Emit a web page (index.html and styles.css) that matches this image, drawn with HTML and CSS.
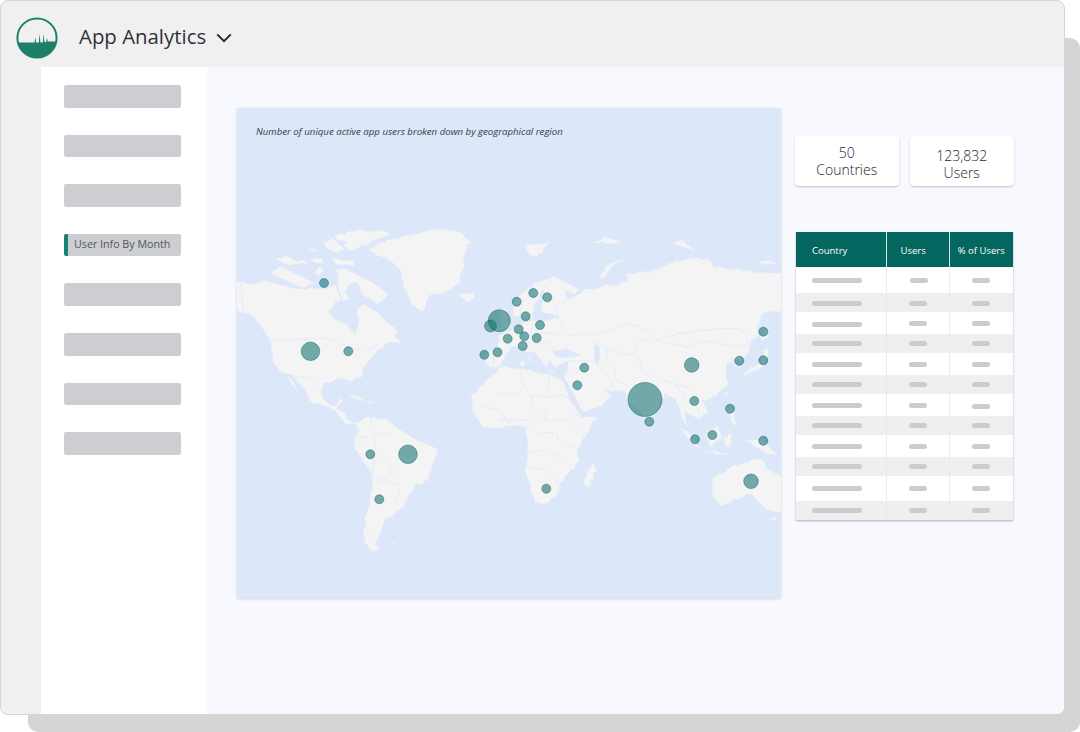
FILE: index.html
```html
<!DOCTYPE html>
<html lang="en">
<head>
    <meta charset="UTF-8">
    <title>App Analytics</title>
    <link rel="stylesheet" href="styles.css">
</head>
<body>
    <div class="backdrop"></div>
    <div class="window">
        <header class="topbar">
            <svg class="logo" width="42" height="42" viewBox="0 0 42 42">
                <defs>
                    <clipPath id="logoClip"><circle cx="21" cy="21" r="20"/></clipPath>
                </defs>
                <circle cx="21" cy="21" r="19.6" fill="none" stroke="#1e7f69" stroke-width="2"/>
                <path clip-path="url(#logoClip)" fill="#1e7f69" d="M0 25.5H18.5L19.3 20 20.1 25.5H22.8L23.6 16.7 24.4 25.5H26.8L27.6 17 28.4 25H30.2L31 21 31.8 24.5H42V42H0Z"/>
            </svg>
            <h1 class="app-title">App Analytics</h1>
            <svg class="chevron" width="16" height="10" viewBox="0 0 16 10">
                <path d="M1.2 1.4L8 8.2 14.8 1.4" fill="none" stroke="#26262e" stroke-width="1.9"/>
            </svg>
        </header>
        <div class="body-row">
            <div class="rail"></div>
            <nav class="sidebar">
                <div class="nav-item"></div>
                <div class="nav-item"></div>
                <div class="nav-item"></div>
                <div class="nav-item active">User Info By Month</div>
                <div class="nav-item"></div>
                <div class="nav-item"></div>
                <div class="nav-item"></div>
                <div class="nav-item"></div>
            </nav>
            <main class="content">
                <section class="map-panel">
                    <svg class="world" viewBox="237 108 544 490">
                        <defs>
                            <!-- roughens the hand traced coasts a bit -->
                            <filter id="coast" x="-5%" y="-5%" width="110%" height="110%">
                                <feTurbulence type="fractalNoise" baseFrequency="0.11" numOctaves="2" seed="4"/>
                                <feDisplacementMap in="SourceGraphic" scale="4.5"/>
                            </filter>
                        </defs>
                        <g filter="url(#coast)">
                        <!-- americas, traced at 3x -->
                        <g transform="translate(230 220) scale(.33333)">
                            <g class="land">
                                <path d="M0 183L60 190 105 181 165 198 215 205 275 205 318 192 335 240 318 242 295 270 310 295 350 310 375 342 385 310 380 265 405 253 440 275 470 305 495 322 505 345 490 345 520 372 490 365 450 385 440 395 420 420 400 440 398 465 365 482 372 508 358 480 320 478 285 490 275 510 283 540 305 558 320 555 333 530 338 545 320 565 345 580 352 600 378 612 345 612 320 578 305 568 270 552 240 545 225 510 185 465 150 455 128 425 125 375 115 355 95 322 70 290 55 278 0 272Z"/>
                                <path d="M170 468L185 475 210 522 190 500Z"/>
                                <path d="M125 150L150 138 175 150 230 178 260 192 215 200 165 180 125 165Z"/>
                                <path d="M140 115L165 105 195 120 235 125 232 132 180 135 150 125Z"/>
                                <path d="M240 115L275 115 280 130 255 130Z"/>
                                <path d="M250 150L275 142 285 160 262 168Z"/>
                                <path d="M235 85L265 90 255 98Z"/>
                                <path d="M282 65L310 55 345 90 310 95 285 80Z"/>
                                <path d="M315 45L380 28 470 35 480 42 445 60 400 75 365 95 340 80 350 65 320 60Z"/>
                                <path d="M305 115L375 125 370 135 320 135Z"/>
                                <path d="M322 150L345 145 385 165 425 185 475 222 465 235 440 255 420 235 395 225 385 190 360 190 345 215 360 235 340 245 325 200Z"/>
                                <path d="M415 90L470 60 560 40 620 25 690 35 720 65 750 55 720 70 705 100 700 140 690 190 640 220 600 230 575 275 545 255 520 200 510 150 480 120 440 105Z"/>
                                <path d="M685 225L730 218 740 235 710 245Z"/>
                                <path d="M350 522L385 530 410 545 380 540Z"/>
                                <path d="M412 545L440 549 418 553Z"/>
                                <path d="M480 970L495 965 490 973Z"/>
                                <path d="M378 612L410 590 470 600 520 635 560 660 625 688 610 730 595 780 550 800 540 830 510 870 470 900 455 930 440 970 450 990 425 995 400 960 405 900 425 810 425 760 370 680 375 650 385 630Z"/>
                            </g>
                            <g class="borders">
                                <path d="M115 357H295L340 375 395 390 440 375"/>
                                <path d="M37 185V272"/>
                                <path d="M183 465L240 478 275 510"/>
                                <path d="M420 595L435 640 480 640 500 620 530 635"/>
                                <path d="M370 680L410 650 435 650 435 690 480 730 490 750 470 775 510 800 495 855"/>
                                <path d="M430 700V760L445 780 470 775"/>
                                <path d="M430 760L405 900 420 960"/>
                                <path d="M375 650L410 650"/>
                                <path d="M445 780L510 800"/>
                            </g>
                        </g>
                        <!-- old world -->
                        <g transform="translate(500 220) scale(.33333)">
                            <g class="land">
                                <path d="M-40 395L-8 388-5 362-5 345 30 335 55 312 100 300 125 305 175 290 165 265 195 240 210 235 270 205 330 195 385 185 375 160 415 160 470 148 510 128 590 112 630 118 640 140 720 150 790 160 880 160V275H790L770 320 775 340 755 370 750 395 720 420 695 415 700 425 715 455 695 425 680 430 682 490 650 525 610 545 625 580 600 600 585 590 555 575 560 620 590 665 570 640 545 590 530 540 495 520 478 555 445 610 418 570 385 552 370 510 335 515 310 505 335 525 300 560 248 578 225 530 200 485 195 470 210 425 160 440 150 420 135 440 115 410 105 395 75 395 110 435 95 425 65 380 35 385 15 410 0 440-30 445-40 430Z"/>
                                <path d="M35 285L38 245 100 190 165 170 235 205 215 225 195 240 165 265 175 290 100 300 65 290Z"/>
                                <path d="M-10 450L-45 490-85 530-85 570-50 625 0 625 30 615 75 620 85 700 75 750 105 850 150 850 185 790 235 720 235 690 292 590 245 590 210 540 190 485 150 465 60 445 0 440Z"/>
                                <path d="M-25 310L-8 305-5 330-25 335Z"/>
                                <path d="M-5 270L15 265 25 300 35 320-5 335 5 305Z"/>
                                <path d="M70 75L155 68 130 85 110 112 90 105Z"/>
                                <path d="M295 172L330 130 385 112 340 135 310 178Z"/>
                                <path d="M260 65L300 62 320 52 365 65 340 72 300 70Z"/>
                                <path d="M515 70L545 58 590 95 560 85Z"/>
                                <path d="M770 122L800 120 840 132 790 135Z"/>
                                <path d="M730 470L790 440 810 390 795 385 785 425 730 460Z"/>
                                <path d="M775 342L800 330 810 352 785 362Z"/>
                                <path d="M672 525L682 510 682 525Z"/>
                                <path d="M680 560L700 570 712 620 695 610Z"/>
                                <path d="M538 625L560 630 600 685 585 680Z"/>
                                <path d="M600 690L650 695 705 705 650 703Z"/>
                                <path d="M615 640L650 615 668 650 630 682Z"/>
                                <path d="M670 650L700 645 690 682 675 680Z"/>
                                <path d="M735 660L790 660 810 685 840 710 790 695Z"/>
                                <path d="M635 780L700 740 750 720 790 720 800 745 880 790V885L800 870 750 820 660 855 640 830Z"/>
                                <path d="M810 893L830 890 825 905Z"/>
                                <path d="M250 790L280 725 288 750 265 800Z"/>
                                <path d="M440 595L458 600 452 618 440 612Z"/>
                                <path d="M60 425L72 420 72 440 60 438Z"/>
                                <path d="M140 452L165 450 160 458Z"/>
                            </g>
                            <g class="water">
                                <path d="M160 395L200 385 240 405 215 415 170 412Z"/>
                                <path d="M280 365L300 385 295 430 300 437 280 420 285 395Z"/>
                                <path d="M100 298L100 265 120 225 128 205 135 225 125 255 125 275 150 280 175 290 125 300Z"/>
                                <path d="M200 215L225 222 210 235 198 228Z"/>
                            </g>
                            <g class="borders">
                                <path d="M60 445L65 520H-10"/>
                                <path d="M145 470V530H95L65 490"/>
                                <path d="M145 530H205"/>
                                <path d="M95 530V570L135 600V570"/>
                                <path d="M0 600H95"/>
                                <path d="M135 600H200L240 620"/>
                                <path d="M200 570L240 590"/>
                                <path d="M100 635H170L175 660 235 690"/>
                                <path d="M90 700L125 690 200 720"/>
                                <path d="M75 745H125L180 790"/>
                                <path d="M-50 560L0 570 30 615"/>
                                <path d="M270 345L345 325 390 310 430 325 470 355 500 350 560 340 610 330 670 325 720 325 750 370 700 380 670 370 600 365 560 380 510 370 470 360 425 360 400 400 420 425 430 460 490 480 530 495 570 500"/>
                                <path d="M290 430L330 480 345 510"/>
                                <path d="M320 385L385 405 400 400"/>
                                <path d="M290 370L320 385 320 420 345 450 350 480 385 500"/>
                                <path d="M210 425L260 420 290 430"/>
                                <path d="M215 470L260 420"/>
                                <path d="M530 495L555 540 590 560 600 600"/>
                                <path d="M170 290L205 345 270 345"/>
                                <path d="M100 300L90 345 40 335"/>
                                <path d="M90 345L150 340 205 345"/>
                                <path d="M70 395L90 370 150 370 165 395"/>
                                <path d="M20 385L-5 400"/>
                                <path d="M-20 395V440"/>
                                <path d="M100 190L70 250 60 290"/>
                                <path d="M130 205L165 170"/>
                            </g>
                        </g>
                        </g>
                        <g class="bubbles">
                            <circle cx="324" cy="283" r="4.5"/>
                            <circle cx="310.500" cy="351.300" r="9.300"/>
                            <circle cx="348.300" cy="351.300" r="4.500"/>
                            <circle cx="370.300" cy="454.300" r="4.500"/>
                            <circle cx="408" cy="454.300" r="9.300"/>
                            <circle cx="379.300" cy="499.300" r="4.500"/>
                            <circle cx="484.300" cy="354.700" r="4.500"/>
                            <circle cx="497.500" cy="352.300" r="4.500"/>
                            <circle cx="490.500" cy="326" r="6"/>
                            <circle cx="499.300" cy="320.700" r="11"/>
                            <circle cx="516.700" cy="301.700" r="4.500"/>
                            <circle cx="533.300" cy="293" r="4.500"/>
                            <circle cx="547.300" cy="297.300" r="4.500"/>
                            <circle cx="525.700" cy="316.300" r="4.500"/>
                            <circle cx="540" cy="325" r="4.500"/>
                            <circle cx="518.700" cy="329.300" r="4.500"/>
                            <circle cx="507.700" cy="338.700" r="4.500"/>
                            <circle cx="524.300" cy="336.300" r="4.500"/>
                            <circle cx="536.700" cy="338" r="4.500"/>
                            <circle cx="522.700" cy="346" r="4.500"/>
                            <circle cx="584.300" cy="367.700" r="4.500"/>
                            <circle cx="577.300" cy="385.300" r="4.500"/>
                            <circle cx="645" cy="399.500" r="17"/>
                            <circle cx="649.300" cy="421.700" r="4.500"/>
                            <circle cx="691.700" cy="365" r="7.300"/>
                            <circle cx="694.300" cy="401" r="4.500"/>
                            <circle cx="730" cy="408.700" r="4.500"/>
                            <circle cx="695" cy="439.300" r="4.500"/>
                            <circle cx="712.300" cy="435" r="4.500"/>
                            <circle cx="763.300" cy="440.700" r="4.500"/>
                            <circle cx="751" cy="481.300" r="7.300"/>
                            <circle cx="763.300" cy="331.700" r="4.500"/>
                            <circle cx="739.300" cy="360.700" r="4.500"/>
                            <circle cx="763.300" cy="360.300" r="4.500"/>
                            <circle cx="546.300" cy="488.700" r="4.500"/>
                        </g>
                    </svg>
                    <p class="map-caption">Number of unique active app users broken down by geographical region</p>
                </section>
                <aside class="side">
                    <div class="stats">
                        <div class="stat">50<br>Countries</div>
                        <div class="stat stat-low">123,832<br>Users</div>
                    </div>
                    <table class="users-table">
                        <thead>
                            <tr><th class="col-country">Country</th><th class="col-users">Users</th><th class="col-pct">% of Users</th></tr>
                        </thead>
                        <tbody>
                            <tr><td><span class="bar long"></span></td><td><span class="bar nudge"></span></td><td><span class="bar"></span></td></tr>
                            <tr><td><span class="bar long low"></span></td><td><span class="bar low"></span></td><td><span class="bar low"></span></td></tr>
                            <tr><td><span class="bar long low"></span></td><td><span class="bar"></span></td><td><span class="bar"></span></td></tr>
                            <tr><td><span class="bar long"></span></td><td><span class="bar"></span></td><td><span class="bar"></span></td></tr>
                            <tr><td><span class="bar long"></span></td><td><span class="bar"></span></td><td><span class="bar"></span></td></tr>
                            <tr><td><span class="bar long"></span></td><td><span class="bar"></span></td><td><span class="bar"></span></td></tr>
                            <tr><td><span class="bar long"></span></td><td><span class="bar"></span></td><td><span class="bar low"></span></td></tr>
                            <tr><td><span class="bar long"></span></td><td><span class="bar"></span></td><td><span class="bar"></span></td></tr>
                            <tr><td><span class="bar long"></span></td><td><span class="bar"></span></td><td><span class="bar"></span></td></tr>
                            <tr><td><span class="bar long"></span></td><td><span class="bar"></span></td><td><span class="bar"></span></td></tr>
                            <tr><td><span class="bar long"></span></td><td><span class="bar"></span></td><td><span class="bar"></span></td></tr>
                            <tr><td><span class="bar long"></span></td><td><span class="bar"></span></td><td><span class="bar"></span></td></tr>
                        </tbody>
                    </table>
                </aside>
            </main>
        </div>
    </div>
</body>
</html>
```

FILE: styles.css
```css
html, body {
    margin: 0;
    height: 732px;
    overflow: hidden;
    background: #fff;
    font-family: "Open Sans", "Liberation Sans", sans-serif;
}
.backdrop {
    position: absolute;
    left: 28px;
    top: 38px;
    right: 0;
    bottom: 0;
    background: #d5d5d5;
    border-radius: 10px;
}
.window {
    position: relative;
    box-sizing: border-box;
    width: 1065px;
    height: 715px;
    display: flex;
    flex-direction: column;
    background: #f0f0f0;
    border: 1px solid #d6d6d6;
    border-radius: 8px;
    overflow: hidden;
}
.topbar {
    height: 66px;
    display: flex;
    align-items: center;
    padding-left: 15px;
    flex-shrink: 0;
}
.logo {
    margin-top: 7px;
}
.app-title {
    margin: 4px 0 0 21px;
    font-size: 20.4px;
    font-weight: 400;
    color: #30303a;
}
.chevron {
    margin: 8px 0 0 10px;
}
.body-row {
    flex: 1;
    display: flex;
    min-height: 0;
}
.rail {
    width: 40px;
    flex-shrink: 0;
}
.sidebar {
    width: 166px;
    flex-shrink: 0;
    background: #fff;
    box-sizing: border-box;
    padding: 18px 26px 0 23px;
    display: flex;
    flex-direction: column;
    gap: 27px;
}
.nav-item {
    height: 22.6px;
    background: #cdced2;
    border-radius: 2px;
    box-sizing: border-box;
    font-size: 10.7px;
    line-height: 20px;
    color: #55555f;
    white-space: nowrap;
}
.nav-item.active {
    border-left: 4px solid #177f74;
    padding-left: 6px;
}
.content {
    flex: 1;
    background: #f7f9fe;
    padding: 41px 0 0 30px;
    display: flex;
    gap: 14px;
    align-items: flex-start;
}
.map-panel {
    position: relative;
    width: 544px;
    height: 490px;
    flex-shrink: 0;
    background: #dce7fa;
    box-shadow: 0 1px 3px rgba(0,0,0,0.14);
}
.world {
    position: absolute;
    inset: 0;
    width: 544px;
    height: 490px;
}
.land path {
    fill: #f4f4f4;
    stroke: #dce7fa;
    stroke-width: 1.5;
    stroke-linejoin: round;
}
.water path {
    fill: #dce7fa;
}
.borders path {
    fill: none;
    stroke: #dce7fa;
    stroke-width: 2;
}
.bubbles circle {
    fill: rgba(8,106,104,0.55);
    stroke: rgba(8,96,96,0.55);
    stroke-width: 0.8;
}
.map-caption {
    position: relative;
    margin: 0;
    padding: 17px 0 0 19px;
    font-size: 9.65px;
    line-height: 14px;
    font-style: italic;
    color: #3a3a46;
}
.side {
    width: 220px;
    padding-top: 28px;
}
.stats {
    display: flex;
    gap: 11.5px;
}
.stat {
    box-sizing: border-box;
    width: 103.5px;
    height: 50px;
    padding-top: 8px;
    background: #fff;
    border-radius: 4px;
    box-shadow: 0 1px 2px rgba(0,0,0,0.22);
    text-align: center;
    font-size: 14px;
    line-height: 17px;
    font-weight: 300;
    color: #26262e;
}
.stat-low {
    padding-top: 11px;
}
.users-table {
    margin: 46px 0 0 1px;
    width: 217px;
    border-collapse: collapse;
    table-layout: fixed;
    background: #fff;
    box-shadow: 0 1px 2px rgba(0,0,0,0.3);
}
.users-table th {
    height: 35px;
    padding: 2px 0 0;
    box-sizing: border-box;
    background: #03665f;
    border-right: 1px solid #d8e4e2;
    color: #fff;
    font-size: 9.5px;
    font-weight: 500;
    text-align: left;
}
.users-table th:last-child {
    border-right: none;
    text-align: center;
}
.col-country {
    width: 90px;
    padding-left: 16px !important;
}
.col-users {
    width: 63px;
    padding-left: 14px !important;
}
.users-table td {
    padding: 0;
    height: 22px;
    text-align: center;
    border-right: 1px solid #eaeaea;
    line-height: 0;
}
.users-table td:first-child {
    text-align: left;
    padding-left: 16px;
}
.users-table td:last-child {
    border-right: none;
}
.users-table tbody tr:nth-child(even) td {
    height: 19px;
    background: #efefef;
}
.users-table tbody tr:nth-child(1) td {
    height: 26px;
}
.users-table tbody tr:nth-child(11) td {
    height: 25px;
}
.bar {
    display: inline-block;
    width: 18px;
    height: 5px;
    border-radius: 2.5px;
    background: #cbccd0;
    vertical-align: middle;
}
.bar.long {
    width: 50px;
}
.bar.nudge {
    margin-left: 2px;
}
.bar.low {
    margin-top: 2px;
}
```
